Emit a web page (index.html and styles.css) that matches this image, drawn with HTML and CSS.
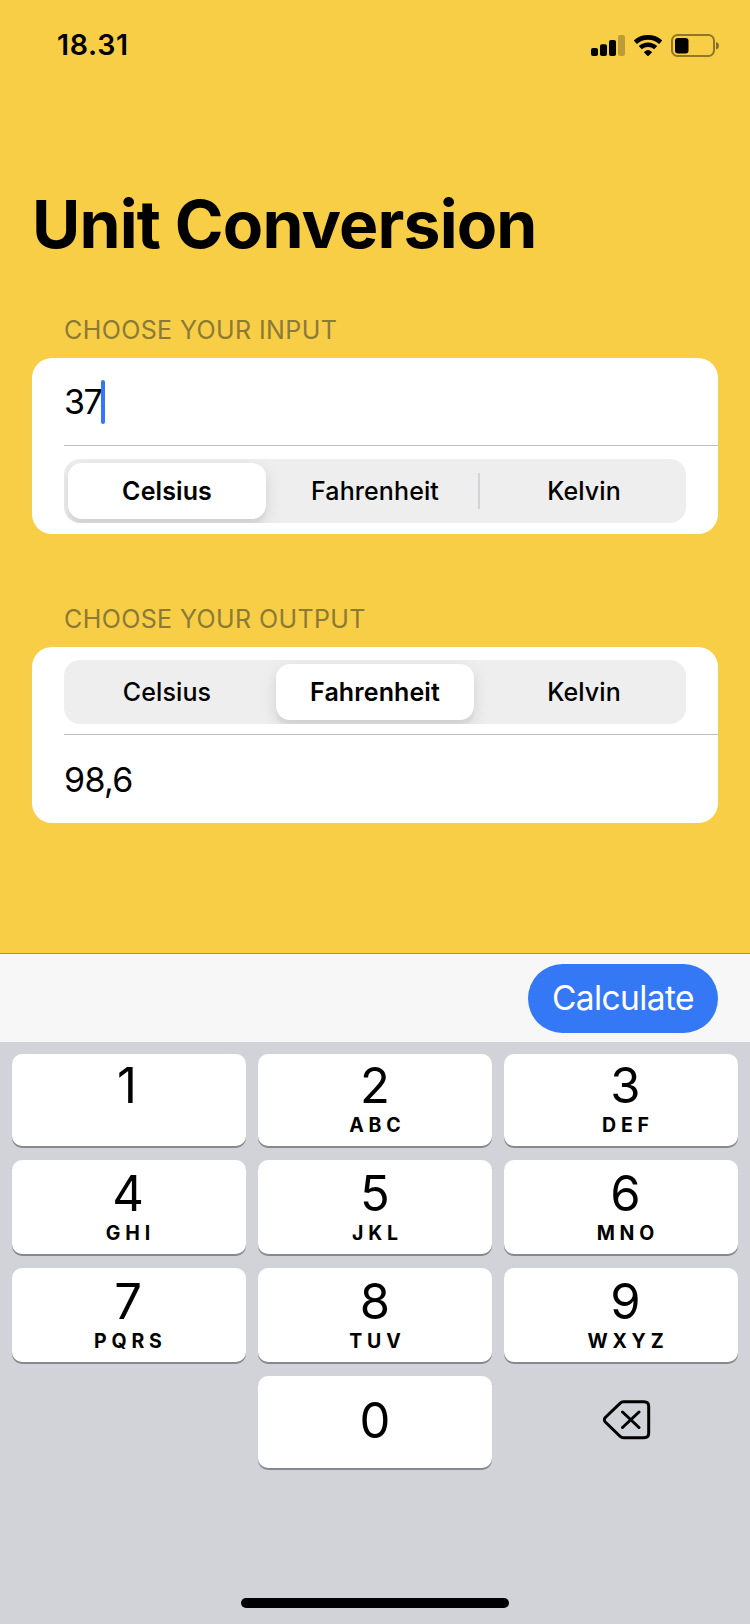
FILE: index.html
```html
<!DOCTYPE html>
<html lang="en">
<head>
<meta charset="utf-8">
<title>Unit Conversion</title>
<link rel="stylesheet" href="styles.css">
</head>
<body>
<div class="screen">
  <header class="status">
    <span class="time">18.31</span>
    <svg class="status-icons" width="130" height="24" viewBox="0 0 130 24">
      <rect x="1" y="15" width="7" height="8" rx="2"/>
      <rect x="10" y="11.300" width="7" height="11.700" rx="2"/>
      <rect x="19" y="7" width="7" height="16" rx="2"/>
      <rect x="28" y="2" width="7" height="21" rx="2" opacity=".24"/>
      <path class="arc" d="M45.300 9.200a19 19 0 0 1 25.400 0M50.300 14.600a11.600 11.600 0 0 1 15.400 0" />
      <path d="M54.300 18.700a5.700 5.700 0 0 1 7.400 0q.5.500 0 1l-3 3q-.7.600-1.400 0l-3-3q-.5-.5 0-1z"/>
      <rect class="shell" x="82" y="2" width="42" height="21" rx="5.500"/>
      <path d="M126 9q3 .8 3 3.800t-3 3.800z" opacity=".45"/>
      <rect x="85" y="5" width="13.500" height="15.500" rx="3"/>
    </svg>
  </header>

  <main class="form">
    <h1 class="title">Unit Conversion</h1>
    <section class="group">
      <h2 class="label">CHOOSE YOUR INPUT</h2>
      <div class="card">
        <div class="row"><span class="value typed">37</span><span class="caret"></span></div>
        <div class="picker-row after">
          <div class="picker">
            <span class="option selected first">Celsius</span>
            <span class="option fahrenheit">Fahrenheit</span>
            <span class="divider"></span>
            <span class="option last">Kelvin</span>
          </div>
        </div>
      </div>
    </section>
    <section class="group">
      <h2 class="label output">CHOOSE YOUR OUTPUT</h2>
      <div class="card">
        <div class="picker-row before">
          <div class="picker">
            <span class="option first">Celsius</span>
            <span class="option selected fahrenheit">Fahrenheit</span>
            <span class="divider hidden"></span>
            <span class="option last">Kelvin</span>
          </div>
        </div>
        <div class="row result"><span class="value">98,6</span></div>
      </div>
    </section>
  </main>

  <div class="toolbar"><span class="calculate">Calculate</span></div>

  <div class="keypad">
    <div class="key left"><b class="digit one">1</b></div>
    <div class="key"><b class="digit">2</b><i class="letters">ABC</i></div>
    <div class="key right"><b class="digit">3</b><i class="letters">DEF</i></div>
    <div class="key left tall"><b class="digit">4</b><i class="letters">GHI</i></div>
    <div class="key tall"><b class="digit">5</b><i class="letters">JKL</i></div>
    <div class="key right tall"><b class="digit">6</b><i class="letters">MNO</i></div>
    <div class="key left tall"><b class="digit">7</b><i class="letters">PQRS</i></div>
    <div class="key tall"><b class="digit">8</b><i class="letters">TUV</i></div>
    <div class="key right tall"><b class="digit">9</b><i class="letters">WXYZ</i></div>
    <div class="blank"></div>
    <div class="key zero"><b class="digit">0</b></div>
    <div class="delete">
      <svg width="48" height="40" viewBox="0 0 48 40">
        <path d="M20.500 1.800H41Q45.700 1.800 45.700 6.500V33Q45.700 37.700 41 37.700H20.500Q18.500 37.700 17 36.200L2.300 22Q.4 19.800 2.300 17.500L17 3.300Q18.500 1.800 20.500 1.800zM19.500 12L36 27.500M36 12L19.500 27.500"/>
      </svg>
    </div>
  </div>
  <footer class="home"><span class="indicator"></span></footer>
</div>
</body>
</html>
```

FILE: styles.css
```css
* { box-sizing: border-box; }

body {
  margin: 0;
  font-family: Inter, "Liberation Sans", sans-serif;
  color: #000;
}

.screen {
  display: flex;
  flex-direction: column;
  width: 750px;
  height: 1624px;
  background: #f8ce46;
  overflow: hidden;
}

.status {
  display: flex;
  justify-content: space-between;
  align-items: center;
  height: 90px;
  padding: 0 30px 0 57px;
}

.time { font-size: 28.5px; font-weight: 600; line-height: 90px; letter-spacing: .7px; }
.status-icons { display: block; }
.arc { fill: none; stroke: #000; stroke-width: 4.6; }
.shell { fill: none; stroke: #000; stroke-width: 2; opacity: .42; }

.form { flex: none; height: 863px; padding: 94px 32px 0; }
.title { margin: 0; font-size: 66px; font-weight: 700; line-height: 80px; letter-spacing: -.85px; white-space: nowrap; }

.label {
  margin: 0;
  padding: 46px 32px 8px;
  font-size: 25px;
  font-weight: 400;
  line-height: 40px;
  letter-spacing: .4px;
  color: #8b7a37;
  white-space: nowrap;
}
.label.output { padding-top: 65px; }

.card { height: 176px; border-radius: 20px; background: #fff; overflow: hidden; }

.row { display: flex; align-items: center; height: 88px; margin-left: 32px; border-bottom: 1px solid #c0c0c2; }
.row.result { border-bottom: 0; }
.value { padding-top: 1px; font-size: 34px; line-height: 86px; letter-spacing: -.7px; }
.value.typed { letter-spacing: -1.6px; }
.caret { width: 4px; height: 44px; border-radius: 2px; background: #3478f6; }

.picker-row { height: 88px; padding-right: 32px; margin-left: 32px; }
.picker-row.after { padding-top: 13px; }
.picker-row.before { padding: 13px 0 0; border-bottom: 1px solid #c0c0c2; }
.before .picker { width: 622px; }

.picker {
  display: grid;
  grid-template-columns: 198px 200px 2px 198px;
  column-gap: 6px;
  align-items: center;
  height: 64px;
  padding: 4px;
  border-radius: 16px;
  background: #eee;
  overflow: hidden;
}
.option {
  height: 56px;
  border-radius: 14px;
  text-align: center;
  font-size: 25px;
  font-weight: 450;
  line-height: 56px;
  letter-spacing: .1px;
}
.fahrenheit { margin: 0 -2px 0 4px; }
.last { margin: 0 1px 0 -1px; }
.selected { background: #fff; font-weight: 570; box-shadow: 0 6px 16px rgba(0, 0, 0, .12), 0 6px 2px rgba(0, 0, 0, .03); }
.divider { height: 36px; background: #d4d4d6; }
.hidden { visibility: hidden; }

.toolbar {
  display: flex;
  justify-content: flex-end;
  height: 89px;
  padding: 10px 32px 0 0;
  border-top: 1px solid #ab923d;
  background: #f7f7f7;
}
.calculate {
  width: 190px;
  height: 69px;
  border-radius: 35px;
  background: #3478f6;
  color: #fff;
  text-align: center;
  font-size: 33.5px;
  font-weight: 400;
  line-height: 68px;
  letter-spacing: -.6px;
}

.keypad {
  display: grid;
  grid-template-columns: repeat(3, 234px);
  grid-template-rows: 92px 94px 94px 92px;
  gap: 14px 12px;
  padding: 12px 12px 2px;
  background: #d2d3d9;
}
.key {
  display: flex;
  flex-direction: column;
  align-items: center;
  padding-top: 2px;
  border-radius: 10px;
  background: #fff;
  box-shadow: 0 2px 0 #88898d;
}
.key.tall { padding-top: 4px; }
.key.left { padding-right: 2px; }
.key.right { padding-left: 9px; }
.key.zero { padding-top: 15px; }
.digit { font-size: 49px; font-weight: 400; line-height: 60px; }
.digit.one { padding-right: 2px; }
.letters { font-size: 19.5px; font-style: normal; font-weight: 650; line-height: 18px; letter-spacing: 4.8px; margin-right: -4.8px; }
.delete { display: flex; align-items: center; justify-content: center; padding: 0 0 5px 11px; }
.delete svg { fill: none; stroke: #000; stroke-width: 3; stroke-linecap: round; stroke-linejoin: round; }

.home { display: flex; flex: 1; justify-content: center; align-items: flex-end; padding-bottom: 16px; background: #d2d3d9; }
.indicator { width: 268px; height: 10px; border-radius: 5px; background: #000; }
```
